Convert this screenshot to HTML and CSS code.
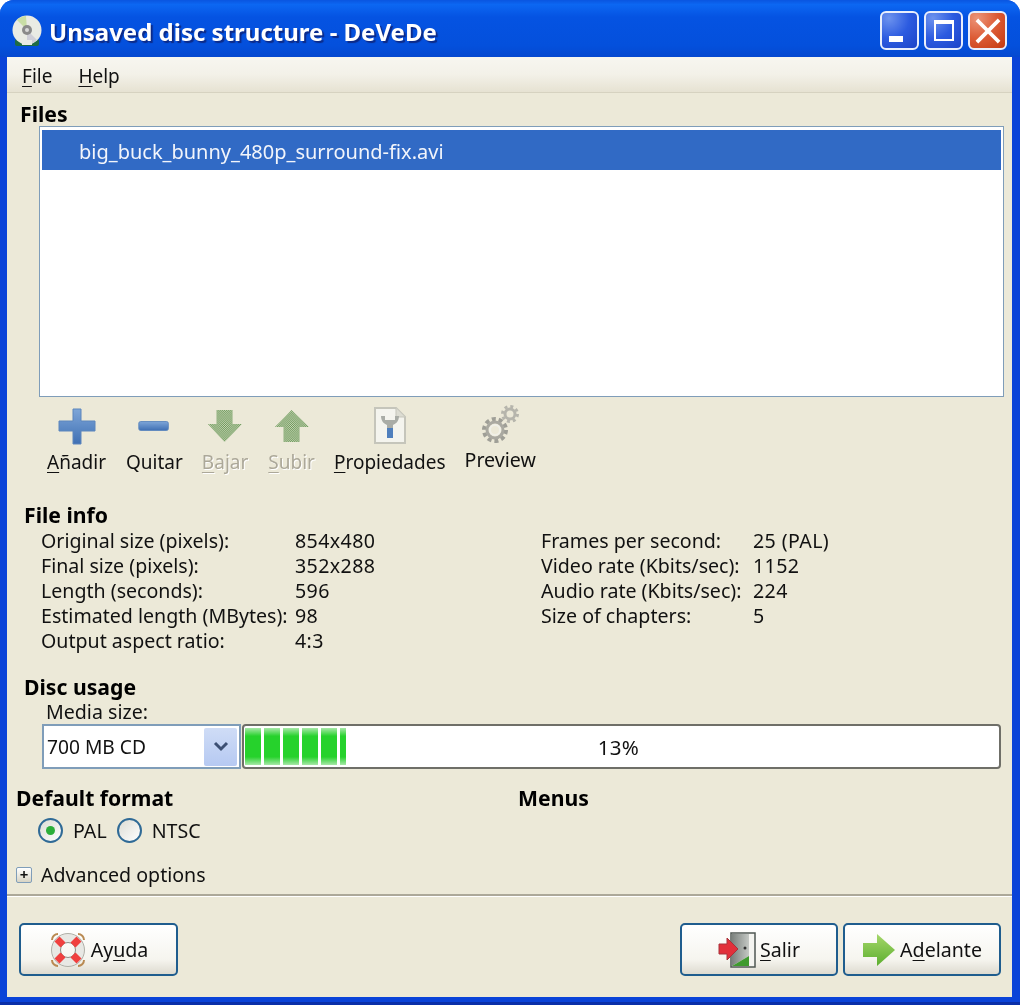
FILE: index.html
```html
<!DOCTYPE html>
<html lang="en">
<head>
<meta charset="utf-8">
<title>Unsaved disc structure - DeVeDe</title>
<link rel="stylesheet" href="styles.css">
</head>
<body>
<div class="window">
  <header class="titlebar">
    <svg class="app-icon" viewBox="0 0 32 32" width="32" height="32">
      <rect x="4" y="24" width="24" height="7" rx="2" fill="#1f6b45"/>
      <circle cx="16" cy="15" r="14.500" fill="#e9ebe4"/>
      <path d="M16 15 L6 5 A14 14 0 0 1 15 1Z" fill="#c9dea6"/>
      <path d="M16 15 L26 25 A14 14 0 0 1 16 29Z" fill="#cfcfd8"/>
      <circle cx="16" cy="15" r="5" fill="#8a8a8a"/>
      <circle cx="16" cy="15" r="2" fill="#d8d8d8"/>
      <rect x="11" y="25" width="10" height="5" fill="#e9ebe4"/>
    </svg>
    <h1 class="title">Unsaved disc structure - DeVeDe</h1>
    <div class="win-buttons">
      <button class="win-btn"><span class="glyph-min"></span></button>
      <button class="win-btn"><span class="glyph-max"></span></button>
      <button class="win-btn close">
        <svg viewBox="0 0 24 24" width="26" height="26"><path d="M3 3 L21 21 M21 3 L3 21" stroke="#fff" stroke-width="3.500" stroke-linecap="square"/></svg>
      </button>
    </div>
  </header>

  <div class="client">
    <nav class="menubar">
      <span class="menu"><u>F</u>ile</span>
      <span class="menu"><u>H</u>elp</span>
    </nav>

    <main class="content">
      <h2 class="heading files-heading">Files</h2>
      <div class="listbox">
        <div class="row-selected">big_buck_bunny_480p_surround-fix.avi</div>
      </div>

      <div class="toolbar">
        <div class="tool tool-add">
          <svg viewBox="0 0 38 38" width="38" height="38"><defs><linearGradient id="bl" x1="0" y1="0" x2="0" y2="1"><stop offset="0" stop-color="#7ea6d8"/><stop offset="1" stop-color="#3f70b4"/></linearGradient></defs><path d="M15 2 H23 V14 H37 V24 H23 V37 H15 V24 H1 V14 H15Z" fill="url(#bl)" stroke="#5c86bd" stroke-width="1"/></svg>
          <span class="tool-label"><u>A</u>ñadir</span>
        </div>
        <div class="tool tool-remove">
          <svg viewBox="0 0 38 38" width="34" height="38"><rect x="2" y="14" width="33" height="10" rx="2" fill="url(#bl)" stroke="#5c86bd"/></svg>
          <span class="tool-label">Quitar</span>
        </div>
        <div class="tool tool-down">
          <svg viewBox="0 0 38 38" width="36" height="38"><defs><pattern id="dots" width="2" height="2" patternUnits="userSpaceOnUse"><rect width="2" height="2" fill="#cfdcbf"/><rect width="1" height="1" fill="#63904f"/><rect x="1" y="1" width="1" height="1" fill="#63904f"/></pattern></defs><path d="M10 2 H27 V17 H37 L18.500 36 L1 17 H10Z" fill="url(#dots)"/></svg>
          <span class="tool-label disabled"><u>B</u>ajar</span>
        </div>
        <div class="tool tool-up">
          <svg viewBox="0 0 38 38" width="36" height="38"><path d="M10 36 H27 V20 H37 L18.500 2 L1 20 H10Z" fill="url(#dots)"/></svg>
          <span class="tool-label disabled"><u>S</u>ubir</span>
        </div>
        <div class="tool tool-props">
          <svg viewBox="0 0 34 38" width="34" height="38"><path d="M2 1 H23 L32 10 V36 H2Z" fill="#f4f4ee" stroke="#c5c5bb" stroke-width="2"/><path d="M23 1 V10 H32" fill="#dcdcd2" stroke="#c5c5bb"/><path d="M8 9 C8 15 12 17 14 18 V31 H20 V18 C22 17 26 15 26 9 L22 9 V13 H12 V9Z" fill="#a9aca6"/><rect x="14" y="21" width="6" height="10" fill="#4f7fbd"/></svg>
          <span class="tool-label"><u>P</u>ropiedades</span>
        </div>
        <div class="tool tool-preview">
          <svg viewBox="0 0 40 40" width="40" height="40"><g fill="none" opacity=".8"><circle cx="15" cy="25" r="11" stroke="#8d8d87" stroke-width="4" stroke-dasharray="4 2.900"/><circle cx="15" cy="25" r="8" stroke="#9a9a94" stroke-width="3"/><circle cx="15" cy="25" r="5" stroke="#f2f2ec" stroke-width="2"/><circle cx="30" cy="9" r="7.500" stroke="#a9a9a2" stroke-width="3" stroke-dasharray="3 2.900"/><circle cx="30" cy="9" r="5" stroke="#a9a9a2" stroke-width="3"/></g></svg>
          <span class="tool-label">Preview</span>
        </div>
      </div>

      <section class="file-info">
        <h2 class="heading">File info</h2>
        <dl class="info-grid">
          <dt>Original size (pixels):</dt><dd>854x480</dd><dt>Frames per second:</dt><dd>25 (PAL)</dd>
          <dt>Final size (pixels):</dt><dd>352x288</dd><dt>Video rate (Kbits/sec):</dt><dd>1152</dd>
          <dt>Length (seconds):</dt><dd>596</dd><dt>Audio rate (Kbits/sec):</dt><dd>224</dd>
          <dt>Estimated length (MBytes):</dt><dd>98</dd><dt>Size of chapters:</dt><dd>5</dd>
          <dt>Output aspect ratio:</dt><dd>4:3</dd>
        </dl>
      </section>

      <section class="disc-usage">
        <h2 class="heading">Disc usage</h2>
        <div class="media-label">Media size:</div>
        <div class="usage-row">
          <div class="combo">
            <span class="combo-value">700 MB CD</span>
            <span class="combo-arrow"><svg viewBox="0 0 16 12" width="16" height="12"><path d="M2 2 L8 8 L14 2" fill="none" stroke="#3c4f73" stroke-width="3"/></svg></span>
          </div>
          <div class="progress">
            <div class="progress-fill">
              <span class="seg"></span><span class="seg"></span><span class="seg"></span><span class="seg"></span><span class="seg"></span><span class="seg last"></span>
            </div>
            <span class="progress-text">13%</span>
          </div>
        </div>
      </section>

      <section class="format-row">
        <div class="format-col">
          <h2 class="heading">Default format</h2>
          <div class="radios">
            <span class="radio checked"></span><span class="radio-label">PAL</span>
            <span class="radio"></span><span class="radio-label">NTSC</span>
          </div>
        </div>
        <h2 class="heading menus-heading">Menus</h2>
      </section>

      <div class="expander">
        <span class="expander-box">+</span>
        <span>Advanced options</span>
      </div>
    </main>

    <footer class="footer">
      <button class="btn btn-wide">
        <svg viewBox="0 0 38 38" width="38" height="38"><circle cx="19" cy="19" r="12" fill="none" stroke="#e8e8e4" stroke-width="9"/><circle cx="19" cy="19" r="16.500" fill="none" stroke="#b0b0a8" stroke-width="1"/><circle cx="19" cy="19" r="7.500" fill="none" stroke="#8d8d87" stroke-width="1"/><g stroke="#f0403f" stroke-width="7"><path d="M8 8 L14 14"/><path d="M30 8 L24 14"/><path d="M8 30 L14 24"/><path d="M30 30 L24 24"/></g><g fill="none" stroke="#b98a52" stroke-width="2"><path d="M3 9 A6 6 0 0 1 9 3"/><path d="M29 3 A6 6 0 0 1 35 9"/><path d="M3 29 A6 6 0 0 0 9 35"/><path d="M29 35 A6 6 0 0 0 35 29"/></g></svg>
        <span>Ay<u>u</u>da</span>
      </button>
      <div class="footer-right">
        <button class="btn">
          <svg viewBox="0 0 38 38" width="38" height="38"><defs><linearGradient id="dr" x1="0" y1="0" x2="1" y2="0"><stop offset="0" stop-color="#7c827e"/><stop offset="1" stop-color="#c4c8c4"/></linearGradient></defs><rect x="13" y="2" width="24" height="34" fill="#f4f4f0" stroke="#4f5753" stroke-width="1.500"/><path d="M14 3 H31 V25 L14 35Z" fill="url(#dr)"/><path d="M31 25 V35 H14Z" fill="#3f9a2e"/><circle cx="27" cy="17" r="1.500" fill="#333"/><path d="M1 13 H9 V7 L20 18 L9 29 V23 H1Z" fill="#e2303a" stroke="#a8323a"/></svg>
          <span><u>S</u>alir</span>
        </button>
        <button class="btn">
          <svg viewBox="0 0 34 34" width="34" height="34"><defs><linearGradient id="gr" x1="0" y1="0" x2="0" y2="1"><stop offset="0" stop-color="#a5d76a"/><stop offset="1" stop-color="#5cae2e"/></linearGradient></defs><path d="M1 10 H15 V1 L33 17 L15 33 V24 H1Z" fill="url(#gr)"/></svg>
          <span>A<u>d</u>elante</span>
        </button>
      </div>
    </footer>
  </div>
</div>
</body>
</html>
```
FILE: styles.css
```css
* { box-sizing: border-box; }
html, body { margin: 0; padding: 0; }
body {
  width: 1020px;
  height: 1005px;
  overflow: hidden;
  background: #fff;
  font-family: "Noto Sans", "Liberation Sans", sans-serif;
  font-size: 19.6px;
  color: #111;
}
u { text-underline-offset: 3px; }
.window {
  height: 1005px;
  display: flex;
  flex-direction: column;
  background: #0a43d8;
  border-radius: 14px 14px 0 0;
  padding: 0 8px 8px 7px;
  filter: blur(0.5px);
  box-shadow: inset 0 -3px 0 #0a2fa8;
}
.titlebar {
  height: 57px;
  flex: none;
  margin: 0 -8px 0 -7px;
  padding: 5px 13px 0 11px;
  display: flex;
  align-items: center;
  border-radius: 14px 14px 0 0;
  background: linear-gradient(#0a55e0 0, #0c67f2 8%, #0553e2 30%, #0450dc 80%, #0548d0 100%);
}
.app-icon { flex: none; }
.title {
  margin: 0 0 0 6px;
  flex: 1;
  font-size: 24px;
  font-weight: 700;
  letter-spacing: 0;
  color: #fff;
  text-shadow: 2px 2px 1px #0c2a88;
}
.win-buttons { display: flex; gap: 5px; margin-bottom: 1px; }
.win-btn {
  width: 39px;
  height: 39px;
  padding: 0;
  display: flex;
  align-items: center;
  justify-content: center;
  border: 2px solid #e8eefc;
  border-radius: 6px;
  background: radial-gradient(circle at 20% 15%, #6c92ee 0, #2c5be0 50%, #1c44c8 100%);
}
.win-btn.close {
  background: radial-gradient(circle at 20% 15%, #ec9478 0, #dc5a34 50%, #c43a10 100%);
}
.glyph-min { width: 14px; height: 6px; background: #fff; margin: 17px 7px 0 0; }
.glyph-max {
  width: 20px;
  height: 21px;
  border: 2px solid #fff;
  border-top-width: 4px;
}
.client {
  flex: 1;
  min-height: 0;
  display: flex;
  flex-direction: column;
  background: #ece9d8;
}
.menubar {
  height: 36px;
  flex: none;
  display: flex;
  align-items: center;
  gap: 26px;
  padding: 2px 0 0 15px;
  font-size: 19px;
  background: linear-gradient(#f7f6f0, #f3f1e8 50%, #e6e2d2);
  border-bottom: 1px solid #d6d2c0;
}
.content { flex: 1; min-height: 0; padding: 0 8px 0 9px; }
.heading {
  margin: 0;
  font-size: 21.2px;
  line-height: 25px;
  font-weight: 700;
  color: #000;
}
.files-heading { margin: 8px 0 0 4px; }
.listbox {
  margin: 0 0 0 23px;
  width: 965px;
  height: 271px;
  padding: 3px 2px 2px;
  background: #fff;
  border: 1px solid #7f9db9;
}
.row-selected {
  height: 40px;
  line-height: 43px;
  padding-left: 37px;
  background: #316ac5;
  color: #f2f5fb;
  font-size: 20px;
}
.toolbar {
  display: flex;
  height: 101px;
  padding-top: 10px;
  align-items: flex-start;
  font-size: 19px;
}
.tool {
  display: flex;
  flex-direction: column;
  align-items: center;
  position: relative;
}
.tool-label { margin-top: 3px; line-height: 28px; }
.tool-add { margin-left: 31px; }
.tool-remove { margin-left: 20px; }
.tool-down { margin-left: 19px; }
.tool-up { margin-left: 20px; }
.tool-props { margin-left: 19px; }
.tool-preview { margin-left: 19px; top: -2px; }
.tool-preview .tool-label { margin-top: 1px; font-size: 19.6px; }
.disabled { color: #aca899; text-shadow: 1px 1px 0 #fff; }
.file-info { margin: 4px 0 0 8px; }
.info-grid {
  margin: 1px 0 0 17px;
  display: grid;
  grid-template-columns: 254px 246px 212px 1fr;
  grid-auto-rows: 25px;
  line-height: 25px;
}
.info-grid dt, .info-grid dd { margin: 0; white-space: nowrap; }
.info-grid dd { letter-spacing: 0.4px; }
.disc-usage { margin: 21px 0 0 0; }
.disc-usage .heading { margin-left: 8px; }
.media-label { margin: 1px 0 0 30px; line-height: 24px; }
.usage-row { display: flex; margin: 0 0 0 26px; height: 45px; }
.combo {
  width: 199px;
  display: flex;
  align-items: center;
  justify-content: space-between;
  background: #fff;
  border: 2px solid #7f9db9;
  padding: 2px 2px 2px 3px;
  font-size: 19.2px;
}
.combo-arrow {
  width: 33px;
  height: 38px;
  display: flex;
  align-items: center;
  justify-content: center;
  background: linear-gradient(#cfdcf6, #b6c9f2);
  border-radius: 2px;
}
.progress {
  margin-left: 1px;
  flex: none;
  width: 759px;
  position: relative;
  display: flex;
  align-items: center;
  justify-content: center;
  background: #fff;
  border: 2px solid #6f6f68;
  border-radius: 4px;
}
.progress-fill {
  position: absolute;
  left: 1px;
  top: 2px;
  bottom: 2px;
  display: flex;
  gap: 3px;
}
.seg {
  width: 16px;
  background: linear-gradient(#a8e8a8 0, #26d22c 22%, #26d22c 78%, #a8e8a8 100%);
}
.seg.last { width: 6px; }
.progress-text { position: relative; left: -3px; font-size: 20.5px; letter-spacing: 0.3px; }
.format-row { display: flex; margin-top: 16px; }
.format-col { width: 502px; }
.radios {
  display: flex;
  align-items: center;
  height: 28px;
  margin: 6px 0 0 22px;
}
.radio {
  width: 25px;
  height: 25px;
  border-radius: 50%;
  border: 2px solid #2f6a96;
  background: linear-gradient(135deg, #dcdcd4, #fff);
  display: flex;
  align-items: center;
  justify-content: center;
}
.radio.checked::after {
  content: "";
  width: 9px;
  height: 9px;
  border-radius: 50%;
  background: #2cae3a;
}
.radio-label { margin: 0 10px; }
.expander {
  display: flex;
  align-items: center;
  gap: 9px;
  margin-top: 18px;
  line-height: 25px;
}
.expander-box {
  width: 16px;
  height: 16px;
  display: flex;
  align-items: center;
  justify-content: center;
  border: 1px solid #7f9db9;
  border-radius: 2px;
  background: linear-gradient(#fff, #d8d4c4);
  font-size: 15px;
  font-weight: 700;
  line-height: 1;
}
.footer {
  flex: none;
  height: 103px;
  display: flex;
  justify-content: space-between;
  padding: 27px 11px 0 12px;
  border-top: 2px solid #aca899;
  box-shadow: inset 0 1px 0 #fff;
}
.footer-right { display: flex; gap: 5px; }
.btn {
  width: 158px;
  height: 53px;
  display: flex;
  align-items: center;
  justify-content: center;
  gap: 4px;
  padding: 0;
  font: inherit;
  color: #111;
  border: 2px solid #1f5d8e;
  border-radius: 5px;
  background: linear-gradient(#fff, #f6f5ef 70%, #dedbd0);
}
.btn-wide { width: 159px; }
```
